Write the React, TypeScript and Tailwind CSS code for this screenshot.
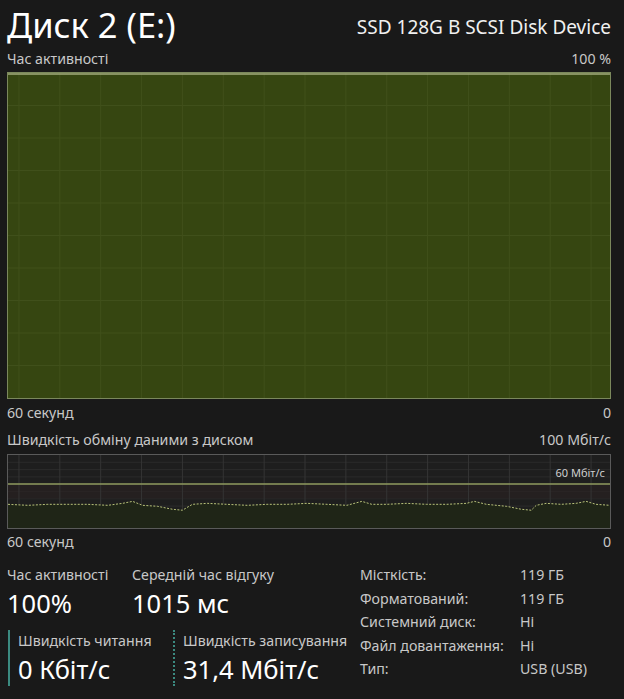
import React from "react";

const font = { fontFamily: '"Noto Sans", "Open Sans", sans-serif' };

// vertical grid x positions (chart-local)
const vLines = Array.from({ length: 15 }, (_, i) => 11 + i * 41);

const ActivityChart: React.FC = () => {
  const w = 604;
  const h = 326;
  return (
    <div className="h-[327px] w-full border border-[#7b885c] bg-[#364611]">
      <svg width="100%" height="100%" viewBox={`0 0 ${w} ${h}`} preserveAspectRatio="none">
        {Array.from({ length: 9 }, (_, i) => (
          <line key={i} x1={0} x2={w} y1={(i + 1) * 32.6} y2={(i + 1) * 32.6} stroke="#40501b" strokeWidth={1} />
        ))}
        {vLines.map((x) => (
          <line key={x} x1={x} x2={x} y1={0} y2={h} stroke="#40501b" strokeWidth={1} />
        ))}
        <line x1={0} x2={w} y1={1} y2={1} stroke="#a3ad7e" strokeWidth={1.5} />
      </svg>
    </div>
  );
};

const points: [number, number][] = [
  [0, 50], [20, 51], [40, 50], [60, 50], [80, 50], [100, 51], [115, 49], [125, 47], [135, 51],
  [150, 52], [165, 55], [175, 56], [185, 50], [200, 49], [220, 50], [240, 51], [260, 50],
  [280, 50], [300, 49], [320, 50], [340, 51], [355, 47], [365, 50], [380, 50], [400, 49],
  [420, 50], [440, 50], [460, 49], [468, 47], [480, 50], [500, 52], [515, 55], [525, 56],
  [530, 51], [540, 49], [555, 50], [570, 49], [580, 47], [590, 50], [604, 51],
];

const TransferChart: React.FC = () => {
  const w = 604;
  const h = 74;
  const d = points.map((p, i) => `${i === 0 ? "M" : "L"}${p[0]},${p[1]}`).join(" ");
  return (
    <div className="relative h-[75px] w-full border border-[#5a5a5a] bg-[#1e1e1e]">
      <svg width="100%" height="100%" viewBox={`0 0 ${w} ${h}`} preserveAspectRatio="none">
        {Array.from({ length: 9 }, (_, i) => (
          <line key={i} x1={0} x2={w} y1={(i + 1) * 7.4} y2={(i + 1) * 7.4} stroke="#2b2b2b" strokeWidth={1} />
        ))}
        <rect x={0} y={30} width={w} height={14} fill="#2a2222" opacity={0.6} />
        {vLines.map((x) => (
          <line key={x} x1={x} x2={x} y1={0} y2={h} stroke="#353535" strokeWidth={1} />
        ))}
        <path d={`${d} L604,74 L0,74 Z`} fill="#1f2517" />
        <line x1={0} x2={w} y1={29.5} y2={29.5} stroke="#8f9a5e" strokeWidth={1.5} />
        <path d={d} fill="none" stroke="#b9c27a" strokeWidth={1} strokeDasharray="2 1.5" />
      </svg>
      <span className="absolute right-[5px] top-[11px] text-[11px] leading-[14px] text-[#d0d0d0]">60 Мбіт/с</span>
    </div>
  );
};

const Row: React.FC<{ left: string; right: string }> = ({ left, right }) => (
  <div className="flex justify-between text-[14.2px] leading-[20px] text-[#c8c8c8]">
    <span>{left}</span>
    <span>{right}</span>
  </div>
);

export default function App() {
  return (
    <div className="h-[699px] w-[624px] overflow-hidden bg-[#191919] pl-[7px] pr-[13px] text-white" style={font}>
      <div className="flex h-[48px] items-end justify-between">
        <h1 className="text-[34.5px] font-normal leading-[46px]">Диск 2 (E:)</h1>
        <span className="pb-[9px] text-[19px] leading-[24px] text-[#f0f0f0]">SSD 128G B SCSI Disk Device</span>
      </div>
      <div className="mt-[1px]">
        <Row left="Час активності" right="100 %" />
      </div>
      <div className="mt-[3px]">
        <ActivityChart />
      </div>
      <div className="mt-[4px]">
        <Row left="60 секунд" right="0" />
      </div>
      <div className="mt-[7px]">
        <Row left="Швидкість обміну даними з диском" right="100 Мбіт/с" />
      </div>
      <div className="mt-[4px]">
        <TransferChart />
      </div>
      <div className="mt-[3px]">
        <Row left="60 секунд" right="0" />
      </div>

      <div className="mt-[13px] flex">
        <div className="w-[353px]">
          <div className="flex">
            <div className="w-[125px]">
              <div className="text-[14.2px] leading-[20px] text-[#c8c8c8]">Час активності</div>
              <div className="text-[25.5px] leading-[36px]">100%</div>
            </div>
            <div>
              <div className="text-[14.2px] leading-[20px] text-[#c8c8c8]">Середній час відгуку</div>
              <div className="text-[25.5px] leading-[36px]">1015 мс</div>
            </div>
          </div>
          <div className="mt-[9px] flex">
            <div className="ml-[1px] w-[165px] border-l-2 border-[#3b8a80] pl-[8px]">
              <div className="text-[14.2px] leading-[22px] text-[#c8c8c8]">Швидкість читання</div>
              <div className="text-[25.5px] leading-[34px]">0 Кбіт/с</div>
            </div>
            <div className="border-l-2 border-dotted border-[#3b8a80] pl-[8px]">
              <div className="text-[14.2px] leading-[22px] text-[#c8c8c8] whitespace-nowrap">Швидкість записування</div>
              <div className="text-[25.5px] leading-[34px] whitespace-nowrap">31,4 Мбіт/с</div>
            </div>
          </div>
        </div>
        <div className="flex flex-col gap-[3.5px] text-[14.2px] leading-[20px] text-[#c8c8c8]">
          {[
            ["Місткість:", "119 ГБ"],
            ["Форматований:", "119 ГБ"],
            ["Системний диск:", "Ні"],
            ["Файл довантаження:", "Ні"],
            ["Тип:", "USB (USB)"],
          ].map(([k, v]) => (
            <div key={k} className="flex h-[20px]">
              <span className="w-[160px]">{k}</span>
              <span>{v}</span>
            </div>
          ))}
        </div>
      </div>
    </div>
  );
}
